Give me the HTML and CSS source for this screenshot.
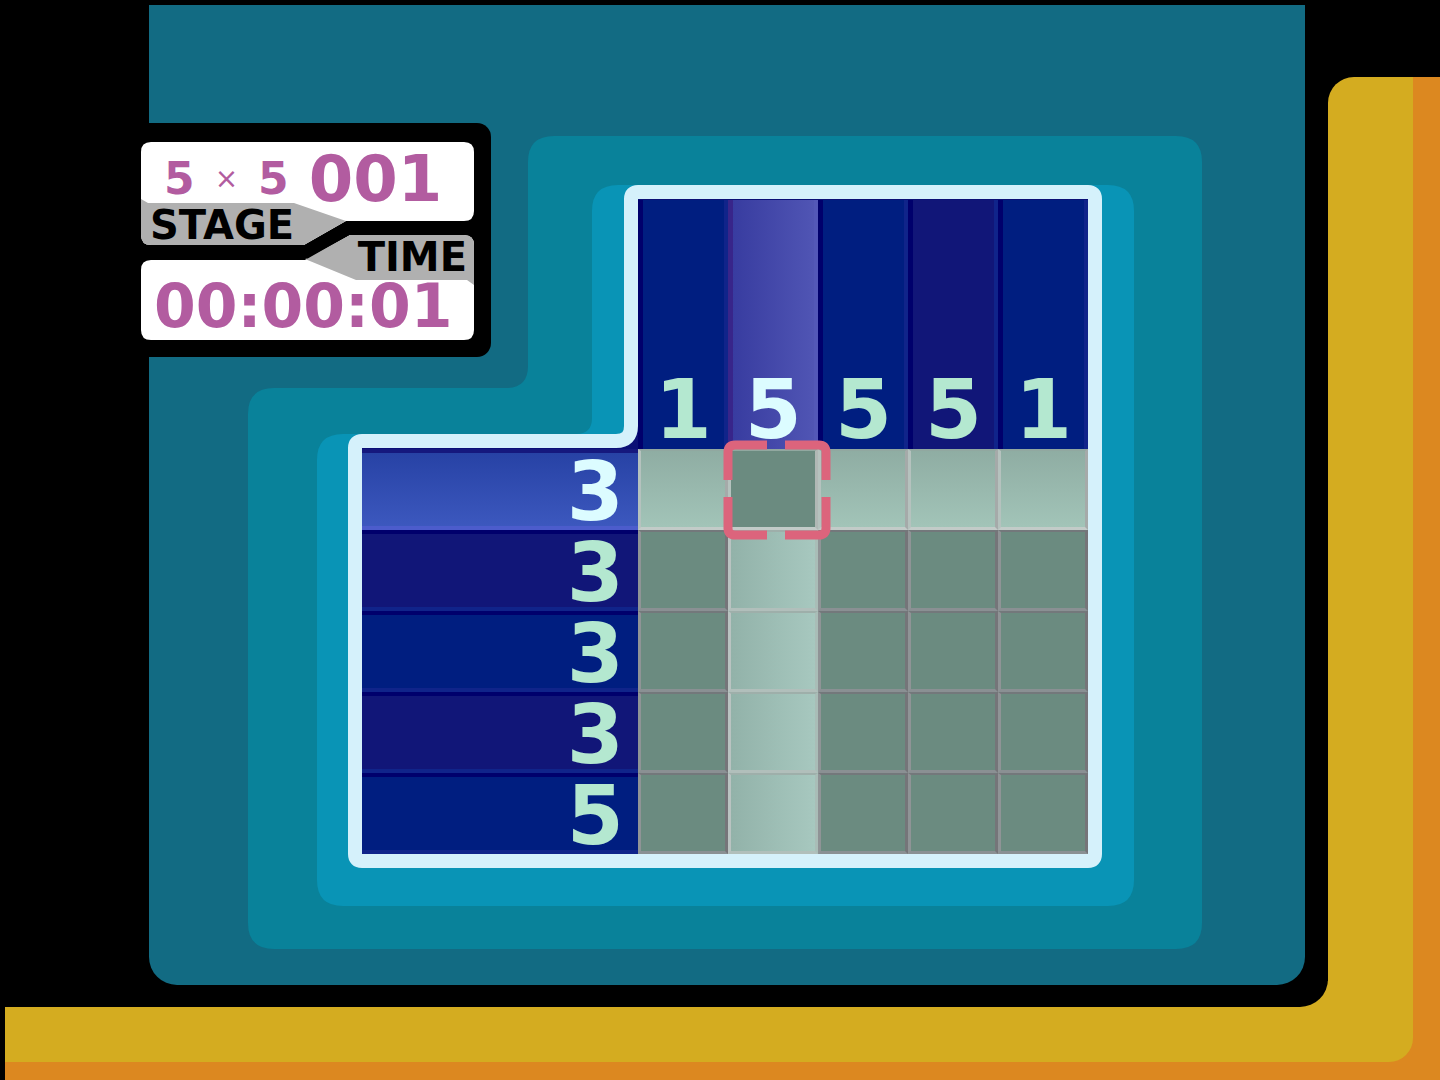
FILE: index.html
```html
<!DOCTYPE html>
<html lang="en">
<head>
  <meta charset="UTF-8">
  <meta name="viewport" content="width=device-width, initial-scale=1.0">
  <title>Stage 001</title>
  <link rel="stylesheet" href="styles.css">
</head>
<body>
  <div class="frame">
    <div class="rail"></div>
    <div class="floor"><div class="floor-face"></div></div>

    <div class="screen">
      <main class="panel">

        <section class="hud">
          <svg class="backdrop" viewBox="0 0 365 234" aria-hidden="true">
            <path fill="#fff" d="M25 19H338Q348 19 348 29V88Q348 98 338 98H220L178 122H25Q15 122 15 112V29Q15 19 25 19Z"/>
            <path fill="#b0b0b0" d="M15 76L22 80H168L220 98L178 122H25Q15 122 15 112Z"/>
            <path fill="#fff" d="M25 137H179L224 112H338Q348 112 348 122V207Q348 217 338 217H25Q15 217 15 207V147Q15 137 25 137Z"/>
            <path fill="#b0b0b0" d="M179 136L224 112H338Q348 112 348 122V162L341 157H230Z"/>
            <path fill="none" stroke="#000" stroke-width="13" d="M15 129H180L222 105H348"/>
          </svg>
          <div class="stage-value">
            <span class="size">5</span>
            <span class="times">×</span>
            <span class="size">5</span>
            <span class="number">001</span>
          </div>
          <div class="label">STAGE</div>
          <div class="label label-right">TIME</div>
          <div class="clock">00:00:01</div>
        </section>

        <section class="field">
          <!-- stepped layers behind the grid -->
          <svg class="backdrop" viewBox="0 0 954 813" preserveAspectRatio="none" aria-hidden="true">
            <path fill="#09829a" d="M306 0H928Q954 0 954 26V787Q954 813 928 813H26Q0 813 0 787V278Q0 252 26 252H258Q280 252 280 230V26Q280 0 306 0Z"/>
            <path fill="#0994b6" d="M370 49H860Q886 49 886 75V744Q886 770 860 770H95Q69 770 69 744V324Q69 298 95 298H328Q344 298 344 282V75Q344 49 370 49Z"/>
            <path fill="#0b1076" stroke="#d5f1fb" stroke-width="14" d="M390 56H840Q847 56 847 63V718Q847 725 840 725H114Q107 725 107 718V312Q107 305 114 305H368Q383 305 383 290V63Q383 56 390 56Z"/>
          </svg>

          <table class="puzzle">
            <colgroup>
              <col class="clue-col">
              <col><col><col><col><col>
            </colgroup>
            <thead>
              <tr>
                <td class="corner"></td>
                <th class="top" scope="col">1</th>
                <th class="top active" scope="col">5</th>
                <th class="top" scope="col">5</th>
                <th class="top alt" scope="col">5</th>
                <th class="top" scope="col">1</th>
              </tr>
            </thead>
            <tbody>
              <tr class="active-row">
                <th class="side active" scope="row">3</th>
                <td><button class="cell" aria-label="Row 1, column 1"></button></td>
                <td class="selected">
                  <button class="cell" aria-label="Row 1, column 2"></button>
                  <svg class="cursor" viewBox="0 0 108 100" aria-hidden="true">
                    <path d="M5 40V12Q5 5 12 5H44M62 5H96Q103 5 103 12V40M103 57V88Q103 95 96 95H62M44 95H12Q5 95 5 88V57"/>
                  </svg>
                </td>
                <td><button class="cell" aria-label="Row 1, column 3"></button></td>
                <td><button class="cell" aria-label="Row 1, column 4"></button></td>
                <td><button class="cell" aria-label="Row 1, column 5"></button></td>
              </tr>
              <tr>
                <th class="side alt" scope="row">3</th>
                <td><button class="cell" aria-label="Row 2, column 1"></button></td>
                <td class="active-col"><button class="cell" aria-label="Row 2, column 2"></button></td>
                <td><button class="cell" aria-label="Row 2, column 3"></button></td>
                <td><button class="cell" aria-label="Row 2, column 4"></button></td>
                <td><button class="cell" aria-label="Row 2, column 5"></button></td>
              </tr>
              <tr>
                <th class="side" scope="row">3</th>
                <td><button class="cell" aria-label="Row 3, column 1"></button></td>
                <td class="active-col"><button class="cell" aria-label="Row 3, column 2"></button></td>
                <td><button class="cell" aria-label="Row 3, column 3"></button></td>
                <td><button class="cell" aria-label="Row 3, column 4"></button></td>
                <td><button class="cell" aria-label="Row 3, column 5"></button></td>
              </tr>
              <tr>
                <th class="side alt" scope="row">3</th>
                <td><button class="cell" aria-label="Row 4, column 1"></button></td>
                <td class="active-col"><button class="cell" aria-label="Row 4, column 2"></button></td>
                <td><button class="cell" aria-label="Row 4, column 3"></button></td>
                <td><button class="cell" aria-label="Row 4, column 4"></button></td>
                <td><button class="cell" aria-label="Row 4, column 5"></button></td>
              </tr>
              <tr>
                <th class="side" scope="row">5</th>
                <td><button class="cell" aria-label="Row 5, column 1"></button></td>
                <td class="active-col"><button class="cell" aria-label="Row 5, column 2"></button></td>
                <td><button class="cell" aria-label="Row 5, column 3"></button></td>
                <td><button class="cell" aria-label="Row 5, column 4"></button></td>
                <td><button class="cell" aria-label="Row 5, column 5"></button></td>
              </tr>
            </tbody>
          </table>
        </section>

      </main>
    </div>
  </div>
</body>
</html>
```
FILE: styles.css
```css
* {
  box-sizing: border-box;
}
body {
  margin: 0;
  background-color: #000;
  font-family: "DejaVu Sans", Verdana, sans-serif;
  font-weight: bold;
}

/* Outer frame */
.frame {
  display: grid;
  grid-template-columns: 1fr 112px;
  grid-template-rows: 1fr 73px;
  min-height: 100vh;
}
.rail {
  grid-area: 1 / 2;
  margin-top: 77px;
  border-right: 27px solid #dc8820;
  border-top-left-radius: 26px;
  background-color: #d4ac20;
}
.floor {
  grid-area: 2 / 1 / 3 / 3;
  margin: -26px 0 0 5px;
  padding: 0 27px 18px 0;
  background-color: #dc8820;
}
.floor-face {
  height: 100%;
  border-bottom-right-radius: 24px;
  background-color: #d4ac20;
}
.screen {
  grid-area: 1 / 1;
  z-index: 1;
  display: flex;
  padding: 5px 23px 22px 149px;
  border-bottom-right-radius: 28px;
  background-color: #000;
}
.panel {
  position: relative;
  flex: 1;
  padding: 131px 103px 36px 99px;
  border-radius: 0 0 28px 28px;
  background-color: #126b83;
}
.backdrop {
  position: absolute;
  top: 0;
  left: 0;
  width: 100%;
  height: 100%;
}

/* Stage and time box */
.hud {
  position: absolute;
  z-index: 1;
  top: 118px;
  left: -23px;
  width: 365px;
  height: 234px;
  padding: 26px 24px 0;
  border-radius: 14px;
  background-color: #000;
}
.stage-value {
  position: relative;
  display: flex;
  align-items: center;
  gap: 20px;
  height: 60px;
  padding-left: 14px;
  color: #b25ca0;
}
.size {
  font-size: 44px;
  line-height: 60px;
}
.times {
  font-size: 28px;
  font-weight: normal;
  line-height: 60px;
}
.number {
  font-size: 64px;
  line-height: 60px;
}
.label {
  position: relative;
  color: #000;
  font-size: 40px;
  line-height: 32px;
}
.label-right {
  text-align: right;
}
.clock {
  position: relative;
  padding-left: 4px;
  color: #b25ca0;
  font-size: 60px;
  line-height: 66px;
}

/* Puzzle */
.field {
  position: relative;
  padding: 64px 114px 95px;
}
.puzzle {
  position: relative;
  width: 100%;
  table-layout: fixed;
  border-collapse: separate;
  border-spacing: 0;
}
.puzzle td {
  padding: 0;
}
.clue-col {
  width: 38%;
}
.top,
.side {
  background-color: #001e80;
  color: #b4e8d0;
  font-size: 82px;
}
.top {
  height: 249px;
  padding: 0 0 3px;
  border-left: 5px solid #00006c;
  border-right: 4px solid #10248a;
  line-height: 72px;
  vertical-align: bottom;
}
.side {
  height: 81px;
  padding: 4px 14px 0 0;
  border-top: 4px solid #00006c;
  border-bottom: 4px solid #10248a;
  line-height: 69px;
  text-align: right;
}
.alt {
  background-color: #111678;
}
.active {
  color: #dcfcff;
}
.top.active {
  border-left-color: #38258a;
  border-right-color: #5358b8;
  background-image: linear-gradient(to right, #383ca0, #5055b4);
}
.side.active {
  border-top-color: #15187e;
  border-bottom-color: #4c5ccc;
  background-image: linear-gradient(#2742a5, #3c58be);
}
.cell {
  display: block;
  width: 100%;
  height: 81px;
  padding: 0;
  border: solid;
  border-width: 2px 3px 3px;
  border-color: #73787b #757579 #8a9093 #8f9496;
  border-radius: 0;
  background-color: #6b8b80;
}
.active-row .cell {
  border-color: #91a8a0 #a5aaa9 #c2cbc8 #b5c2be;
  background-image: linear-gradient(#8fada3, #a2c4b8);
}
.active-col .cell {
  border-color: #9eafaa #a9bdb7 #b1bfbb #b9c3c1;
  background-image: linear-gradient(to right, #92b2a9, #a7c8bf);
}
.selected {
  position: relative;
}
.selected .cell {
  border-right-color: #b0b8b5;
  background-image: none;
}
.cursor {
  position: absolute;
  top: -9px;
  left: -5px;
  width: 108px;
  height: 100px;
  fill: none;
  stroke: #dc647c;
  stroke-width: 9px;
  pointer-events: none;
}
```
